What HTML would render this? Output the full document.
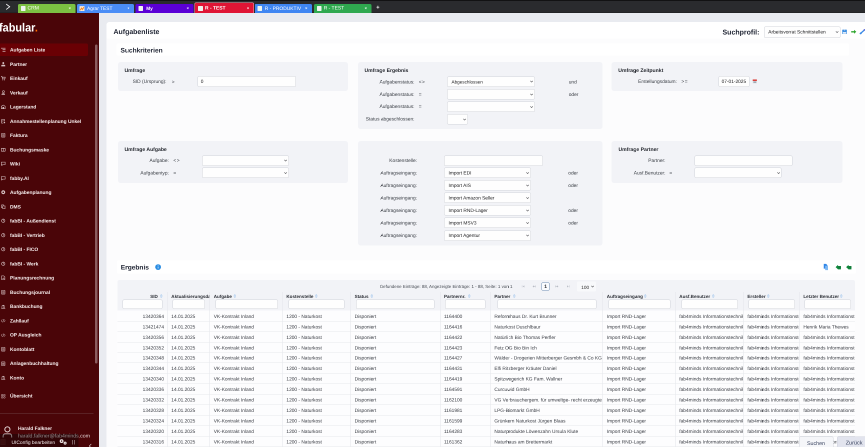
<!DOCTYPE html>
<html><head><meta charset="utf-8"><title>Aufgabenliste</title>
<style>
html,body{margin:0;padding:0;background:#e9ebf0;}
body{width:865px;height:447px;overflow:hidden;font-family:"Liberation Sans",sans-serif;text-rendering:geometricPrecision;-webkit-font-smoothing:antialiased;}
#root{position:absolute;left:0;top:0;width:1730px;height:894px;overflow:hidden;background:#e9ebf0;transform:scale(0.5);transform-origin:0 0;will-change:transform;}
.b{position:absolute;display:block;}
.t{position:absolute;white-space:nowrap;font-family:"Liberation Sans",sans-serif;}
</style></head><body><div id="root">

<div class="b" style="left:213px;top:44px;width:1527px;height:876px;background:#fcfcfd;border-radius:6px 0 0 0;"></div>
<div class="b" style="left:213px;top:44px;width:1527px;height:33.2px;background:#ffffff;border-radius:6px 0 0 0;"></div>
<div class="b" style="left:233px;top:87.4px;width:1464.8px;height:23.6px;background:#ffffff;border-radius:3px;"></div>
<div class="b" style="left:234px;top:521.2px;width:1477.5px;height:26.3px;background:#ffffff;border-radius:3px;"></div>
<div class="t" style="left:227px;top:54.46px;height:19.46px;line-height:19.46px;font-size:13.9px;font-weight:700;color:#1f2433;">Aufgabenliste</div>
<div class="t" style="left:241px;top:91.96px;height:18.48px;line-height:18.48px;font-size:13.2px;font-weight:700;color:#1f2433;">Suchkriterien</div>
<div class="t" style="left:241.5px;top:526.36px;height:18.48px;line-height:18.48px;font-size:13.2px;font-weight:700;color:#1f2433;">Ergebnis</div>
<div class="t" style="left:1445px;top:55.2px;height:19.6px;line-height:19.6px;font-size:14px;font-weight:700;color:#1f2433;">Suchprofil:</div>
<div class="b" style="left:1528.4px;top:52.5px;width:152.6px;height:23px;background:#fefefe;border:1px solid #d2d4da;border-radius:3px;box-sizing:border-box;"></div>
<div class="t" style="left:1536.6px;top:58.14px;height:13.52px;line-height:13.52px;font-size:9.66px;font-weight:400;color:#1c1c1e;">Arbeitsvorrat Schnittstellen</div>
<svg class="b" style="left:1671.2px;top:62.2px" width="6.4" height="4" viewBox="0 0 8 5"><path d="M0.8 0.8 L4 4 L7.2 0.8" fill="none" stroke="#5a5a5e" stroke-width="1.45"/></svg>
<svg class="b" style="left:1684.4px;top:58.6px" width="10.2" height="9.6" viewBox="0 0 10 10"><rect x="0.2" y="0.2" width="9.6" height="9.6" rx="1" fill="#3d8fe2"/><rect x="3.9" y="0.2" width="2.3" height="2.0" fill="#a9cbf0"/><rect x="1.5" y="5.2" width="7" height="3.8" fill="#dde9f8"/></svg>
<svg class="b" style="left:1701.8px;top:59px" width="11" height="9.2" viewBox="0 0 12 10"><path d="M0.4 3.6 H6.6 V0.8 L11.6 5 L6.6 9.2 V6.4 H0.4 Z" fill="#2fa62f"/></svg>
<svg class="b" style="left:1719.2px;top:57.2px" width="12" height="12" viewBox="0 0 12 12"><path d="M1.6 10.2 L10.4 2.6" stroke="#3a8ae6" stroke-width="2.6" stroke-linecap="round"/><circle cx="2.6" cy="9.6" r="1.9" fill="#3a8ae6"/><circle cx="9.8" cy="2.8" r="1.7" fill="#6a6fd6"/></svg>
<svg class="b" style="left:309.8px;top:528.3px" width="12.4" height="12.4" viewBox="0 0 12 12"><circle cx="6" cy="6" r="5.6" fill="#2b8de3"/><rect x="5.3" y="5.2" width="1.4" height="3.6" fill="#d8eafa"/><circle cx="6" cy="3.5" r="0.9" fill="#d8eafa"/></svg>
<svg class="b" style="left:1646.8px;top:526.8px" width="9.6" height="14" viewBox="0 0 10 14"><path d="M0.5 0.5 H5.5 L8 3 V10.5 H0.5 Z" fill="#2f86e8"/><path d="M3.5 4.5 H9.5 V13.5 H3.5 Z" fill="#7db8f3"/></svg>
<svg class="b" style="left:1671.2px;top:529.2px" width="11.2" height="10.4" viewBox="0 0 11 10"><path d="M0.4 5 L5 0.8 V3 H10.6 V9.4 H4.6 V7 H5 V9.2 Z" fill="#0e8a3c"/><path d="M0.4 5 L5 9.2 V0.8 Z" fill="#0e8a3c"/><rect x="5" y="3" width="5.6" height="4.6" fill="#137a3a"/></svg>
<svg class="b" style="left:1692px;top:529.2px" width="11.2" height="10.4" viewBox="0 0 11 10"><path d="M0.4 5 L5 0.8 V3 H10.6 V9.4 H4.6 V7 H5 V9.2 Z" fill="#0e8a3c"/><path d="M0.4 5 L5 9.2 V0.8 Z" fill="#0e8a3c"/><rect x="5" y="3" width="5.6" height="4.6" fill="#137a3a"/></svg>
<div class="b" style="left:236px;top:124px;width:460px;height:58.4px;background:#f2f3f7;border-radius:5.2px;"></div>
<div class="b" style="left:716px;top:124px;width:488.6px;height:134.2px;background:#f2f3f7;border-radius:5.2px;"></div>
<div class="b" style="left:1223px;top:124px;width:462px;height:58.4px;background:#f2f3f7;border-radius:5.2px;"></div>
<div class="b" style="left:236px;top:281.8px;width:460px;height:84.6px;background:#f2f3f7;border-radius:5.2px;"></div>
<div class="b" style="left:716px;top:281.8px;width:488.6px;height:209.4px;background:#f2f3f7;border-radius:5.2px;"></div>
<div class="b" style="left:1223px;top:281.8px;width:462px;height:84.2px;background:#f2f3f7;border-radius:5.2px;"></div>
<div class="t" style="left:249px;top:134.66px;height:14.28px;line-height:14.28px;font-size:10.2px;font-weight:700;color:#1f2229;">Umfrage</div>
<div class="t" style="left:-67px;width:400px;text-align:right;top:157.4px;height:13.58px;line-height:13.58px;font-size:9.7px;font-weight:400;color:#3c4047;">SID (Ursprung):</div>
<div class="t" style="left:343.6px;top:157.6px;height:13.58px;line-height:13.58px;font-size:9.7px;font-weight:400;color:#3c4047;">&gt;</div>
<div class="b" style="left:395px;top:152.3px;width:197px;height:21.4px;background:#fefefe;border:1px solid #d2d4da;border-radius:3px;box-sizing:border-box;"></div>
<div class="t" style="left:401.6px;top:157.18px;height:13.44px;line-height:13.44px;font-size:9.6px;font-weight:400;color:#1c1c1e;">0</div>
<div class="t" style="left:729px;top:134.66px;height:14.28px;line-height:14.28px;font-size:10.2px;font-weight:700;color:#1f2229;">Umfrage Ergebnis</div>
<div class="t" style="left:429px;width:400px;text-align:right;top:158.1px;height:13.58px;line-height:13.58px;font-size:9.7px;font-weight:400;color:#3c4047;">Aufgabenstatus:</div>
<div class="t" style="left:837.4px;top:158.1px;height:13.58px;line-height:13.58px;font-size:9.7px;font-weight:400;color:#3c4047;letter-spacing:1px;">&lt;&gt;</div>
<div class="b" style="left:894px;top:152.7px;width:175.6px;height:21px;background:#fefefe;border:1px solid #d2d4da;border-radius:3px;box-sizing:border-box;"></div>
<div class="t" style="left:903px;top:157.64px;height:12.94px;line-height:12.94px;font-size:9.24px;font-weight:400;color:#1c1c1e;">Abgeschlossen</div>
<svg class="b" style="left:1059.8px;top:161.4px" width="6.4" height="4" viewBox="0 0 8 5"><path d="M0.8 0.8 L4 4 L7.2 0.8" fill="none" stroke="#5a5a5e" stroke-width="1.45"/></svg>
<div class="t" style="left:429px;width:400px;text-align:right;top:182.6px;height:13.58px;line-height:13.58px;font-size:9.7px;font-weight:400;color:#3c4047;">Aufgabenstatus:</div>
<div class="t" style="left:837.4px;top:182.6px;height:13.58px;line-height:13.58px;font-size:9.7px;font-weight:400;color:#3c4047;">=</div>
<div class="b" style="left:894px;top:177.8px;width:175.6px;height:21px;background:#fefefe;border:1px solid #d2d4da;border-radius:3px;box-sizing:border-box;"></div>
<svg class="b" style="left:1059.8px;top:186.5px" width="6.4" height="4" viewBox="0 0 8 5"><path d="M0.8 0.8 L4 4 L7.2 0.8" fill="none" stroke="#5a5a5e" stroke-width="1.45"/></svg>
<div class="t" style="left:429px;width:400px;text-align:right;top:207.22px;height:13.58px;line-height:13.58px;font-size:9.7px;font-weight:400;color:#3c4047;">Aufgabenstatus:</div>
<div class="t" style="left:837.4px;top:207.22px;height:13.58px;line-height:13.58px;font-size:9.7px;font-weight:400;color:#3c4047;">=</div>
<div class="b" style="left:894px;top:202.8px;width:175.6px;height:21px;background:#fefefe;border:1px solid #d2d4da;border-radius:3px;box-sizing:border-box;"></div>
<svg class="b" style="left:1059.8px;top:211.5px" width="6.4" height="4" viewBox="0 0 8 5"><path d="M0.8 0.8 L4 4 L7.2 0.8" fill="none" stroke="#5a5a5e" stroke-width="1.45"/></svg>
<div class="t" style="left:429px;width:400px;text-align:right;top:232px;height:13.58px;line-height:13.58px;font-size:9.7px;font-weight:400;color:#3c4047;">Status abgeschlossen:</div>
<div class="b" style="left:894px;top:227.9px;width:41.6px;height:21.4px;background:#fefefe;border:1px solid #d2d4da;border-radius:3px;box-sizing:border-box;"></div>
<svg class="b" style="left:925.8px;top:236.8px" width="6.4" height="4" viewBox="0 0 8 5"><path d="M0.8 0.8 L4 4 L7.2 0.8" fill="none" stroke="#5a5a5e" stroke-width="1.45"/></svg>
<div class="t" style="left:1137.4px;top:158.1px;height:13.58px;line-height:13.58px;font-size:9.7px;font-weight:400;color:#3c4047;">und</div>
<div class="t" style="left:1137.4px;top:182.6px;height:13.58px;line-height:13.58px;font-size:9.7px;font-weight:400;color:#3c4047;">oder</div>
<div class="t" style="left:1236.6px;top:134.66px;height:14.28px;line-height:14.28px;font-size:10.2px;font-weight:700;color:#1f2229;">Umfrage Zeitpunkt</div>
<div class="t" style="left:953.8px;width:400px;text-align:right;top:157.4px;height:13.58px;line-height:13.58px;font-size:9.7px;font-weight:400;color:#3c4047;">Erstellungsdatum:</div>
<div class="t" style="left:1362.8px;top:157.4px;height:13.58px;line-height:13.58px;font-size:9.7px;font-weight:400;color:#3c4047;letter-spacing:1px;">&gt;=</div>
<div class="b" style="left:1436.6px;top:152.1px;width:62.6px;height:21.6px;background:#fefefe;border:1px solid #d2d4da;border-radius:3px;box-sizing:border-box;"></div>
<div class="t" style="left:1443.2px;top:157.08px;height:13.44px;line-height:13.44px;font-size:9.6px;font-weight:400;color:#1c1c1e;">07-01-2025</div>
<svg class="b" style="left:1505px;top:157.6px" width="9.2" height="9.6" viewBox="0 0 10 10"><rect x="0.5" y="0.8" width="9" height="8.6" rx="0.8" fill="#d9dde3"/><rect x="0.5" y="0.8" width="9" height="3.2" fill="#d9352f"/><rect x="2" y="5.2" width="6" height="3" fill="#9aa3ae"/></svg>
<div class="t" style="left:249px;top:292.66px;height:14.28px;line-height:14.28px;font-size:10.2px;font-weight:700;color:#1f2229;">Umfrage Aufgabe</div>
<div class="t" style="left:-62.2px;width:400px;text-align:right;top:315.4px;height:13.58px;line-height:13.58px;font-size:9.7px;font-weight:400;color:#3c4047;">Aufgabe:</div>
<div class="t" style="left:-62.2px;width:400px;text-align:right;top:340.4px;height:13.58px;line-height:13.58px;font-size:9.7px;font-weight:400;color:#3c4047;">Aufgabentyp:</div>
<div class="t" style="left:346.8px;top:315.4px;height:13.58px;line-height:13.58px;font-size:9.7px;font-weight:400;color:#3c4047;letter-spacing:1px;">&lt;&gt;</div>
<div class="t" style="left:346.8px;top:340.4px;height:13.58px;line-height:13.58px;font-size:9.7px;font-weight:400;color:#3c4047;">=</div>
<div class="b" style="left:404px;top:310.5px;width:174px;height:21.2px;background:#fefefe;border:1px solid #d2d4da;border-radius:3px;box-sizing:border-box;"></div>
<svg class="b" style="left:568.2px;top:319.3px" width="6.4" height="4" viewBox="0 0 8 5"><path d="M0.8 0.8 L4 4 L7.2 0.8" fill="none" stroke="#5a5a5e" stroke-width="1.45"/></svg>
<div class="b" style="left:404px;top:335.3px;width:174px;height:21px;background:#fefefe;border:1px solid #d2d4da;border-radius:3px;box-sizing:border-box;"></div>
<svg class="b" style="left:568.2px;top:344px" width="6.4" height="4" viewBox="0 0 8 5"><path d="M0.8 0.8 L4 4 L7.2 0.8" fill="none" stroke="#5a5a5e" stroke-width="1.45"/></svg>
<div class="t" style="left:434px;width:400px;text-align:right;top:315.2px;height:13.58px;line-height:13.58px;font-size:9.7px;font-weight:400;color:#3c4047;">Kostenstelle:</div>
<div class="b" style="left:888px;top:310.5px;width:198.4px;height:21px;background:#fefefe;border:1px solid #d2d4da;border-radius:3px;box-sizing:border-box;"></div>
<div class="t" style="left:434px;width:400px;text-align:right;top:340.2px;height:13.58px;line-height:13.58px;font-size:9.7px;font-weight:400;color:#3c4047;">Auftragseingang:</div>
<div class="b" style="left:888px;top:335.3px;width:174px;height:21px;background:#fefefe;border:1px solid #d2d4da;border-radius:3px;box-sizing:border-box;"></div>
<div class="t" style="left:897px;top:339.98px;height:13.44px;line-height:13.44px;font-size:9.6px;font-weight:400;color:#1c1c1e;">Import EDI</div>
<svg class="b" style="left:1052.2px;top:344px" width="6.4" height="4" viewBox="0 0 8 5"><path d="M0.8 0.8 L4 4 L7.2 0.8" fill="none" stroke="#5a5a5e" stroke-width="1.45"/></svg>
<div class="t" style="left:1136.6px;top:340.2px;height:13.58px;line-height:13.58px;font-size:9.7px;font-weight:400;color:#3c4047;">oder</div>
<div class="t" style="left:434px;width:400px;text-align:right;top:365.24px;height:13.58px;line-height:13.58px;font-size:9.7px;font-weight:400;color:#3c4047;">Auftragseingang:</div>
<div class="b" style="left:888px;top:360.34px;width:174px;height:21px;background:#fefefe;border:1px solid #d2d4da;border-radius:3px;box-sizing:border-box;"></div>
<div class="t" style="left:897px;top:365.02px;height:13.44px;line-height:13.44px;font-size:9.6px;font-weight:400;color:#1c1c1e;">Import AIS</div>
<svg class="b" style="left:1052.2px;top:369.04px" width="6.4" height="4" viewBox="0 0 8 5"><path d="M0.8 0.8 L4 4 L7.2 0.8" fill="none" stroke="#5a5a5e" stroke-width="1.45"/></svg>
<div class="t" style="left:1136.6px;top:365.24px;height:13.58px;line-height:13.58px;font-size:9.7px;font-weight:400;color:#3c4047;">oder</div>
<div class="t" style="left:434px;width:400px;text-align:right;top:390.28px;height:13.58px;line-height:13.58px;font-size:9.7px;font-weight:400;color:#3c4047;">Auftragseingang:</div>
<div class="b" style="left:888px;top:385.38px;width:174px;height:21px;background:#fefefe;border:1px solid #d2d4da;border-radius:3px;box-sizing:border-box;"></div>
<div class="t" style="left:897px;top:390.06px;height:13.44px;line-height:13.44px;font-size:9.6px;font-weight:400;color:#1c1c1e;">Import Amazon Seller</div>
<svg class="b" style="left:1052.2px;top:394.08px" width="6.4" height="4" viewBox="0 0 8 5"><path d="M0.8 0.8 L4 4 L7.2 0.8" fill="none" stroke="#5a5a5e" stroke-width="1.45"/></svg>
<div class="t" style="left:434px;width:400px;text-align:right;top:415.32px;height:13.58px;line-height:13.58px;font-size:9.7px;font-weight:400;color:#3c4047;">Auftragseingang:</div>
<div class="b" style="left:888px;top:410.42px;width:174px;height:21px;background:#fefefe;border:1px solid #d2d4da;border-radius:3px;box-sizing:border-box;"></div>
<div class="t" style="left:897px;top:415.1px;height:13.44px;line-height:13.44px;font-size:9.6px;font-weight:400;color:#1c1c1e;">Import RND-Lager</div>
<svg class="b" style="left:1052.2px;top:419.12px" width="6.4" height="4" viewBox="0 0 8 5"><path d="M0.8 0.8 L4 4 L7.2 0.8" fill="none" stroke="#5a5a5e" stroke-width="1.45"/></svg>
<div class="t" style="left:1136.6px;top:415.32px;height:13.58px;line-height:13.58px;font-size:9.7px;font-weight:400;color:#3c4047;">oder</div>
<div class="t" style="left:434px;width:400px;text-align:right;top:440.38px;height:13.58px;line-height:13.58px;font-size:9.7px;font-weight:400;color:#3c4047;">Auftragseingang:</div>
<div class="b" style="left:888px;top:435.46px;width:174px;height:21px;background:#fefefe;border:1px solid #d2d4da;border-radius:3px;box-sizing:border-box;"></div>
<div class="t" style="left:897px;top:440.14px;height:13.44px;line-height:13.44px;font-size:9.6px;font-weight:400;color:#1c1c1e;">Import MSV3</div>
<svg class="b" style="left:1052.2px;top:444.16px" width="6.4" height="4" viewBox="0 0 8 5"><path d="M0.8 0.8 L4 4 L7.2 0.8" fill="none" stroke="#5a5a5e" stroke-width="1.45"/></svg>
<div class="t" style="left:1136.6px;top:440.38px;height:13.58px;line-height:13.58px;font-size:9.7px;font-weight:400;color:#3c4047;">oder</div>
<div class="t" style="left:434px;width:400px;text-align:right;top:465.4px;height:13.58px;line-height:13.58px;font-size:9.7px;font-weight:400;color:#3c4047;">Auftragseingang:</div>
<div class="b" style="left:888px;top:460.5px;width:174px;height:21px;background:#fefefe;border:1px solid #d2d4da;border-radius:3px;box-sizing:border-box;"></div>
<div class="t" style="left:897px;top:465.18px;height:13.44px;line-height:13.44px;font-size:9.6px;font-weight:400;color:#1c1c1e;">Import Agentur</div>
<svg class="b" style="left:1052.2px;top:469.2px" width="6.4" height="4" viewBox="0 0 8 5"><path d="M0.8 0.8 L4 4 L7.2 0.8" fill="none" stroke="#5a5a5e" stroke-width="1.45"/></svg>
<div class="t" style="left:1237px;top:292.66px;height:14.28px;line-height:14.28px;font-size:10.2px;font-weight:700;color:#1f2229;">Umfrage Partner</div>
<div class="t" style="left:931px;width:400px;text-align:right;top:315.2px;height:13.58px;line-height:13.58px;font-size:9.7px;font-weight:400;color:#3c4047;">Partner:</div>
<div class="t" style="left:931px;width:400px;text-align:right;top:340.2px;height:13.58px;line-height:13.58px;font-size:9.7px;font-weight:400;color:#3c4047;">Ausf.Benutzer:</div>
<div class="t" style="left:1338.8px;top:340.2px;height:13.58px;line-height:13.58px;font-size:9.7px;font-weight:400;color:#3c4047;">=</div>
<div class="b" style="left:1389.2px;top:310.5px;width:196.2px;height:21px;background:#fefefe;border:1px solid #d2d4da;border-radius:3px;box-sizing:border-box;"></div>
<div class="b" style="left:1389.2px;top:335.3px;width:174.2px;height:21px;background:#fefefe;border:1px solid #d2d4da;border-radius:3px;box-sizing:border-box;"></div>
<svg class="b" style="left:1553.6px;top:344px" width="6.4" height="4" viewBox="0 0 8 5"><path d="M0.8 0.8 L4 4 L7.2 0.8" fill="none" stroke="#5a5a5e" stroke-width="1.45"/></svg>
<div class="b" style="left:234.5px;top:560px;width:1475px;height:61.2px;background:#f2f3f7;border-radius:4px 4px 0 0;"></div>
<div class="b" style="left:234.5px;top:621.2px;width:1475px;height:272.8px;background:#fdfdfe;"></div>
<div class="t" style="left:759.4px;top:567.18px;height:12.44px;line-height:12.44px;font-size:8.88px;font-weight:400;color:#4a4f57;">Gefundene Einträge: 88, Angezeigte Einträge: 1 - 88, Seite: 1 von 1</div>
<svg class="b" style="left:1043.4px;top:570.2px" width="8" height="5.6" viewBox="0 0 10 8"><path d="M1 1 V7" stroke="#b5b9c2" stroke-width="1"/><path d="M7.5 1 L3 4 L7.5 7 Z" fill="#b5b9c2"/></svg>
<svg class="b" style="left:1064.4px;top:570.2px" width="8" height="5.6" viewBox="0 0 10 8"><path d="M5 1 L0.8 4 L5 7 Z M9.4 1 L5.2 4 L9.4 7 Z" fill="#b5b9c2"/></svg>
<svg class="b" style="left:1110.4px;top:570.2px" width="8" height="5.6" viewBox="0 0 10 8"><path d="M0.6 1 L4.8 4 L0.6 7 Z M5 1 L9.2 4 L5 7 Z" fill="#b5b9c2"/></svg>
<svg class="b" style="left:1131.6px;top:570.2px" width="8" height="5.6" viewBox="0 0 10 8"><path d="M9 1 V7" stroke="#b5b9c2" stroke-width="1"/><path d="M2.5 1 L7 4 L2.5 7 Z" fill="#b5b9c2"/></svg>
<div class="b" style="left:1154px;top:563.2px;width:38px;height:19.6px;background:#f8f9fb;border-radius:2.4px;"></div>
<div class="b" style="left:1083px;top:564.8px;width:16.2px;height:16.4px;background:#fbfcfe;border:1.1px solid #6f8fb4;border-radius:2px;box-sizing:border-box;"></div>
<div class="t" style="left:1088.4px;top:567.14px;height:13.72px;line-height:13.72px;font-size:9.8px;font-weight:700;color:#2a2d33;">1</div>
<div class="t" style="left:1162.6px;top:567.62px;height:13.16px;line-height:13.16px;font-size:9.4px;font-weight:400;color:#333;">100</div>
<svg class="b" style="left:1182.2px;top:571.4px" width="6.4" height="4" viewBox="0 0 8 5"><path d="M0.8 0.8 L4 4 L7.2 0.8" fill="none" stroke="#5a5a5e" stroke-width="1.45"/></svg>
<div class="t" style="left:-84.4px;width:400px;text-align:right;top:587.04px;height:12.74px;line-height:12.74px;font-size:9.1px;font-weight:700;color:#2c2f36;">SID</div>
<svg class="b" style="left:320px;top:587.8px" width="5.2" height="8.4" viewBox="0 0 6 10"><path d="M3 0.7 L5.3 3.6 H0.7 Z M3 9.3 L5.3 6.4 H0.7 Z" fill="#eef4fb" stroke="#86b4e6" stroke-width="0.8"/></svg>
<div class="b" style="left:244.5px;top:599px;width:80.7px;height:19.4px;background:#fefefe;border:1px solid #d2d4da;border-radius:3px;box-sizing:border-box;"></div>
<div class="b" style="left:334.3px;top:584.4px;width:1px;height:309.6px;background:#e3e5ea;"></div>
<div class="t" style="left:342.6px;top:587.04px;height:12.74px;line-height:12.74px;font-size:9.1px;font-weight:700;color:#2c2f36;width:76.8px;overflow:hidden;">Aktualisierungsdatum</div>
<div class="b" style="left:344.5px;top:599px;width:65.7px;height:19.4px;background:#fefefe;border:1px solid #d2d4da;border-radius:3px;box-sizing:border-box;"></div>
<div class="b" style="left:419.1px;top:584.4px;width:1px;height:309.6px;background:#e3e5ea;"></div>
<div class="t" style="left:427.4px;top:587.04px;height:12.74px;line-height:12.74px;font-size:9.1px;font-weight:700;color:#2c2f36;width:137.4px;overflow:hidden;">Aufgabe</div>
<svg class="b" style="left:467.2px;top:587.8px" width="5.2" height="8.4" viewBox="0 0 6 10"><path d="M3 0.7 L5.3 3.6 H0.7 Z M3 9.3 L5.3 6.4 H0.7 Z" fill="#eef4fb" stroke="#86b4e6" stroke-width="0.8"/></svg>
<div class="b" style="left:431px;top:599px;width:124.5px;height:19.4px;background:#fefefe;border:1px solid #d2d4da;border-radius:3px;box-sizing:border-box;"></div>
<div class="b" style="left:564.5px;top:584.4px;width:1px;height:309.6px;background:#e3e5ea;"></div>
<div class="t" style="left:572.8px;top:587.04px;height:12.74px;line-height:12.74px;font-size:9.1px;font-weight:700;color:#2c2f36;width:128.4px;overflow:hidden;">Kostenstelle</div>
<svg class="b" style="left:630.4px;top:587.8px" width="5.2" height="8.4" viewBox="0 0 6 10"><path d="M3 0.7 L5.3 3.6 H0.7 Z M3 9.3 L5.3 6.4 H0.7 Z" fill="#eef4fb" stroke="#86b4e6" stroke-width="0.8"/></svg>
<div class="b" style="left:576.6px;top:599px;width:112.8px;height:19.4px;background:#fefefe;border:1px solid #d2d4da;border-radius:3px;box-sizing:border-box;"></div>
<div class="b" style="left:700.9px;top:584.4px;width:1px;height:309.6px;background:#e3e5ea;"></div>
<div class="t" style="left:709.2px;top:587.04px;height:12.74px;line-height:12.74px;font-size:9.1px;font-weight:700;color:#2c2f36;width:170.8px;overflow:hidden;">Status</div>
<svg class="b" style="left:740.8px;top:587.8px" width="5.2" height="8.4" viewBox="0 0 6 10"><path d="M3 0.7 L5.3 3.6 H0.7 Z M3 9.3 L5.3 6.4 H0.7 Z" fill="#eef4fb" stroke="#86b4e6" stroke-width="0.8"/></svg>
<div class="b" style="left:711.6px;top:599px;width:157.2px;height:19.4px;background:#fefefe;border:1px solid #d2d4da;border-radius:3px;box-sizing:border-box;"></div>
<div class="b" style="left:879.7px;top:584.4px;width:1px;height:309.6px;background:#e3e5ea;"></div>
<div class="t" style="left:888px;top:587.04px;height:12.74px;line-height:12.74px;font-size:9.1px;font-weight:700;color:#2c2f36;width:92.8px;overflow:hidden;">Partnernr.</div>
<svg class="b" style="left:936.4px;top:587.8px" width="5.2" height="8.4" viewBox="0 0 6 10"><path d="M3 0.7 L5.3 3.6 H0.7 Z M3 9.3 L5.3 6.4 H0.7 Z" fill="#eef4fb" stroke="#86b4e6" stroke-width="0.8"/></svg>
<div class="b" style="left:890.2px;top:599px;width:81px;height:19.4px;background:#fefefe;border:1px solid #d2d4da;border-radius:3px;box-sizing:border-box;"></div>
<div class="b" style="left:980.5px;top:584.4px;width:1px;height:309.6px;background:#e3e5ea;"></div>
<div class="t" style="left:988.8px;top:587.04px;height:12.74px;line-height:12.74px;font-size:9.1px;font-weight:700;color:#2c2f36;width:216.8px;overflow:hidden;">Partner</div>
<svg class="b" style="left:1025.8px;top:587.8px" width="5.2" height="8.4" viewBox="0 0 6 10"><path d="M3 0.7 L5.3 3.6 H0.7 Z M3 9.3 L5.3 6.4 H0.7 Z" fill="#eef4fb" stroke="#86b4e6" stroke-width="0.8"/></svg>
<div class="b" style="left:994.8px;top:599px;width:197.8px;height:19.4px;background:#fefefe;border:1px solid #d2d4da;border-radius:3px;box-sizing:border-box;"></div>
<div class="b" style="left:1205.3px;top:584.4px;width:1px;height:309.6px;background:#e3e5ea;"></div>
<div class="t" style="left:1213.6px;top:587.04px;height:12.74px;line-height:12.74px;font-size:9.1px;font-weight:700;color:#2c2f36;width:137px;overflow:hidden;">Auftragseingang</div>
<svg class="b" style="left:1288px;top:587.8px" width="5.2" height="8.4" viewBox="0 0 6 10"><path d="M3 0.7 L5.3 3.6 H0.7 Z M3 9.3 L5.3 6.4 H0.7 Z" fill="#eef4fb" stroke="#86b4e6" stroke-width="0.8"/></svg>
<div class="b" style="left:1217px;top:599px;width:124.2px;height:19.4px;background:#fefefe;border:1px solid #d2d4da;border-radius:3px;box-sizing:border-box;"></div>
<div class="b" style="left:1350.3px;top:584.4px;width:1px;height:309.6px;background:#e3e5ea;"></div>
<div class="t" style="left:1358.6px;top:587.04px;height:12.74px;line-height:12.74px;font-size:9.1px;font-weight:700;color:#2c2f36;width:128.2px;overflow:hidden;">Ausf.Benutzer</div>
<svg class="b" style="left:1423.8px;top:587.8px" width="5.2" height="8.4" viewBox="0 0 6 10"><path d="M3 0.7 L5.3 3.6 H0.7 Z M3 9.3 L5.3 6.4 H0.7 Z" fill="#eef4fb" stroke="#86b4e6" stroke-width="0.8"/></svg>
<div class="b" style="left:1362.6px;top:599px;width:113.4px;height:19.4px;background:#fefefe;border:1px solid #d2d4da;border-radius:3px;box-sizing:border-box;"></div>
<div class="b" style="left:1486.5px;top:584.4px;width:1px;height:309.6px;background:#e3e5ea;"></div>
<div class="t" style="left:1494.8px;top:587.04px;height:12.74px;line-height:12.74px;font-size:9.1px;font-weight:700;color:#2c2f36;width:104px;overflow:hidden;">Ersteller</div>
<svg class="b" style="left:1534.4px;top:587.8px" width="5.2" height="8.4" viewBox="0 0 6 10"><path d="M3 0.7 L5.3 3.6 H0.7 Z M3 9.3 L5.3 6.4 H0.7 Z" fill="#eef4fb" stroke="#86b4e6" stroke-width="0.8"/></svg>
<div class="b" style="left:1497.4px;top:599px;width:92.4px;height:19.4px;background:#fefefe;border:1px solid #d2d4da;border-radius:3px;box-sizing:border-box;"></div>
<div class="b" style="left:1598.5px;top:584.4px;width:1px;height:309.6px;background:#e3e5ea;"></div>
<div class="t" style="left:1606.8px;top:587.04px;height:12.74px;line-height:12.74px;font-size:9.1px;font-weight:700;color:#2c2f36;width:102.5px;overflow:hidden;">Letzter Benutzer</div>
<svg class="b" style="left:1680.4px;top:587.8px" width="5.2" height="8.4" viewBox="0 0 6 10"><path d="M3 0.7 L5.3 3.6 H0.7 Z M3 9.3 L5.3 6.4 H0.7 Z" fill="#eef4fb" stroke="#86b4e6" stroke-width="0.8"/></svg>
<div class="b" style="left:1608.5px;top:599px;width:93.5px;height:19.4px;background:#fefefe;border:1px solid #d2d4da;border-radius:3px;box-sizing:border-box;"></div>
<div class="b" style="left:234.5px;top:641.64px;width:1475px;height:1px;background:#e6e8ec;"></div>
<div class="t" style="left:-72px;width:400px;text-align:right;top:626.68px;height:13.44px;line-height:13.44px;font-size:9.6px;font-weight:400;color:#3a3d44;">13420364</div>
<div class="t" style="left:342.6px;top:626.68px;height:13.44px;line-height:13.44px;font-size:9.6px;font-weight:400;color:#3a3d44;width:76.4px;overflow:hidden;">14.01.2025</div>
<div class="t" style="left:427.4px;top:626.68px;height:13.44px;line-height:13.44px;font-size:9.6px;font-weight:400;color:#3a3d44;width:137px;overflow:hidden;">VK-Kontrakt Inland</div>
<div class="t" style="left:572.8px;top:626.68px;height:13.44px;line-height:13.44px;font-size:9.6px;font-weight:400;color:#3a3d44;width:128px;overflow:hidden;">1200 - Naturkost</div>
<div class="t" style="left:709.2px;top:626.68px;height:13.44px;line-height:13.44px;font-size:9.6px;font-weight:400;color:#3a3d44;width:170.4px;overflow:hidden;">Disponiert</div>
<div class="t" style="left:888px;top:626.68px;height:13.44px;line-height:13.44px;font-size:9.6px;font-weight:400;color:#3a3d44;width:92.4px;overflow:hidden;">1164400</div>
<div class="t" style="left:988.8px;top:626.68px;height:13.44px;line-height:13.44px;font-size:9.6px;font-weight:400;color:#3a3d44;width:216.4px;overflow:hidden;">Reformhaus Dr. Kurt Brunner</div>
<div class="t" style="left:1213.6px;top:626.68px;height:13.44px;line-height:13.44px;font-size:9.6px;font-weight:400;color:#3a3d44;width:136.6px;overflow:hidden;">Import RND-Lager</div>
<div class="t" style="left:1358.6px;top:626.68px;height:13.44px;line-height:13.44px;font-size:9.6px;font-weight:400;color:#3a3d44;width:127.8px;overflow:hidden;">fab4minds Informationstechnik</div>
<div class="t" style="left:1494.8px;top:626.68px;height:13.44px;line-height:13.44px;font-size:9.6px;font-weight:400;color:#3a3d44;width:103.6px;overflow:hidden;">fab4minds Informationstechnik</div>
<div class="t" style="left:1606.8px;top:626.68px;height:13.44px;line-height:13.44px;font-size:9.6px;font-weight:400;color:#3a3d44;width:102.1px;overflow:hidden;">fab4minds Informationstechnik</div>
<div class="b" style="left:234.5px;top:662.58px;width:1475px;height:1px;background:#e6e8ec;"></div>
<div class="t" style="left:-72px;width:400px;text-align:right;top:647.62px;height:13.44px;line-height:13.44px;font-size:9.6px;font-weight:400;color:#3a3d44;">13421474</div>
<div class="t" style="left:342.6px;top:647.62px;height:13.44px;line-height:13.44px;font-size:9.6px;font-weight:400;color:#3a3d44;width:76.4px;overflow:hidden;">14.01.2025</div>
<div class="t" style="left:427.4px;top:647.62px;height:13.44px;line-height:13.44px;font-size:9.6px;font-weight:400;color:#3a3d44;width:137px;overflow:hidden;">VK-Kontrakt Inland</div>
<div class="t" style="left:572.8px;top:647.62px;height:13.44px;line-height:13.44px;font-size:9.6px;font-weight:400;color:#3a3d44;width:128px;overflow:hidden;">1200 - Naturkost</div>
<div class="t" style="left:709.2px;top:647.62px;height:13.44px;line-height:13.44px;font-size:9.6px;font-weight:400;color:#3a3d44;width:170.4px;overflow:hidden;">Disponiert</div>
<div class="t" style="left:888px;top:647.62px;height:13.44px;line-height:13.44px;font-size:9.6px;font-weight:400;color:#3a3d44;width:92.4px;overflow:hidden;">1164416</div>
<div class="t" style="left:988.8px;top:647.62px;height:13.44px;line-height:13.44px;font-size:9.6px;font-weight:400;color:#3a3d44;width:216.4px;overflow:hidden;">Naturkost Duschlbaur</div>
<div class="t" style="left:1213.6px;top:647.62px;height:13.44px;line-height:13.44px;font-size:9.6px;font-weight:400;color:#3a3d44;width:136.6px;overflow:hidden;">Import RND-Lager</div>
<div class="t" style="left:1358.6px;top:647.62px;height:13.44px;line-height:13.44px;font-size:9.6px;font-weight:400;color:#3a3d44;width:127.8px;overflow:hidden;">fab4minds Informationstechnik</div>
<div class="t" style="left:1494.8px;top:647.62px;height:13.44px;line-height:13.44px;font-size:9.6px;font-weight:400;color:#3a3d44;width:103.6px;overflow:hidden;">fab4minds Informationstechnik</div>
<div class="t" style="left:1606.8px;top:647.62px;height:13.44px;line-height:13.44px;font-size:9.6px;font-weight:400;color:#3a3d44;width:102.1px;overflow:hidden;">Henrik Maria Thewes</div>
<div class="b" style="left:234.5px;top:683.52px;width:1475px;height:1px;background:#e6e8ec;"></div>
<div class="t" style="left:-72px;width:400px;text-align:right;top:668.56px;height:13.44px;line-height:13.44px;font-size:9.6px;font-weight:400;color:#3a3d44;">13420356</div>
<div class="t" style="left:342.6px;top:668.56px;height:13.44px;line-height:13.44px;font-size:9.6px;font-weight:400;color:#3a3d44;width:76.4px;overflow:hidden;">14.01.2025</div>
<div class="t" style="left:427.4px;top:668.56px;height:13.44px;line-height:13.44px;font-size:9.6px;font-weight:400;color:#3a3d44;width:137px;overflow:hidden;">VK-Kontrakt Inland</div>
<div class="t" style="left:572.8px;top:668.56px;height:13.44px;line-height:13.44px;font-size:9.6px;font-weight:400;color:#3a3d44;width:128px;overflow:hidden;">1200 - Naturkost</div>
<div class="t" style="left:709.2px;top:668.56px;height:13.44px;line-height:13.44px;font-size:9.6px;font-weight:400;color:#3a3d44;width:170.4px;overflow:hidden;">Disponiert</div>
<div class="t" style="left:888px;top:668.56px;height:13.44px;line-height:13.44px;font-size:9.6px;font-weight:400;color:#3a3d44;width:92.4px;overflow:hidden;">1164422</div>
<div class="t" style="left:988.8px;top:668.56px;height:13.44px;line-height:13.44px;font-size:9.6px;font-weight:400;color:#3a3d44;width:216.4px;overflow:hidden;">Natürlich Bio Thomas Perfler</div>
<div class="t" style="left:1213.6px;top:668.56px;height:13.44px;line-height:13.44px;font-size:9.6px;font-weight:400;color:#3a3d44;width:136.6px;overflow:hidden;">Import RND-Lager</div>
<div class="t" style="left:1358.6px;top:668.56px;height:13.44px;line-height:13.44px;font-size:9.6px;font-weight:400;color:#3a3d44;width:127.8px;overflow:hidden;">fab4minds Informationstechnik</div>
<div class="t" style="left:1494.8px;top:668.56px;height:13.44px;line-height:13.44px;font-size:9.6px;font-weight:400;color:#3a3d44;width:103.6px;overflow:hidden;">fab4minds Informationstechnik</div>
<div class="t" style="left:1606.8px;top:668.56px;height:13.44px;line-height:13.44px;font-size:9.6px;font-weight:400;color:#3a3d44;width:102.1px;overflow:hidden;">fab4minds Informationstechnik</div>
<div class="b" style="left:234.5px;top:704.46px;width:1475px;height:1px;background:#e6e8ec;"></div>
<div class="t" style="left:-72px;width:400px;text-align:right;top:689.5px;height:13.44px;line-height:13.44px;font-size:9.6px;font-weight:400;color:#3a3d44;">13420352</div>
<div class="t" style="left:342.6px;top:689.5px;height:13.44px;line-height:13.44px;font-size:9.6px;font-weight:400;color:#3a3d44;width:76.4px;overflow:hidden;">14.01.2025</div>
<div class="t" style="left:427.4px;top:689.5px;height:13.44px;line-height:13.44px;font-size:9.6px;font-weight:400;color:#3a3d44;width:137px;overflow:hidden;">VK-Kontrakt Inland</div>
<div class="t" style="left:572.8px;top:689.5px;height:13.44px;line-height:13.44px;font-size:9.6px;font-weight:400;color:#3a3d44;width:128px;overflow:hidden;">1200 - Naturkost</div>
<div class="t" style="left:709.2px;top:689.5px;height:13.44px;line-height:13.44px;font-size:9.6px;font-weight:400;color:#3a3d44;width:170.4px;overflow:hidden;">Disponiert</div>
<div class="t" style="left:888px;top:689.5px;height:13.44px;line-height:13.44px;font-size:9.6px;font-weight:400;color:#3a3d44;width:92.4px;overflow:hidden;">1164423</div>
<div class="t" style="left:988.8px;top:689.5px;height:13.44px;line-height:13.44px;font-size:9.6px;font-weight:400;color:#3a3d44;width:216.4px;overflow:hidden;">Fetz OG Bio Bin Ich</div>
<div class="t" style="left:1213.6px;top:689.5px;height:13.44px;line-height:13.44px;font-size:9.6px;font-weight:400;color:#3a3d44;width:136.6px;overflow:hidden;">Import RND-Lager</div>
<div class="t" style="left:1358.6px;top:689.5px;height:13.44px;line-height:13.44px;font-size:9.6px;font-weight:400;color:#3a3d44;width:127.8px;overflow:hidden;">fab4minds Informationstechnik</div>
<div class="t" style="left:1494.8px;top:689.5px;height:13.44px;line-height:13.44px;font-size:9.6px;font-weight:400;color:#3a3d44;width:103.6px;overflow:hidden;">fab4minds Informationstechnik</div>
<div class="t" style="left:1606.8px;top:689.5px;height:13.44px;line-height:13.44px;font-size:9.6px;font-weight:400;color:#3a3d44;width:102.1px;overflow:hidden;">fab4minds Informationstechnik</div>
<div class="b" style="left:234.5px;top:725.4px;width:1475px;height:1px;background:#e6e8ec;"></div>
<div class="t" style="left:-72px;width:400px;text-align:right;top:710.44px;height:13.44px;line-height:13.44px;font-size:9.6px;font-weight:400;color:#3a3d44;">13420348</div>
<div class="t" style="left:342.6px;top:710.44px;height:13.44px;line-height:13.44px;font-size:9.6px;font-weight:400;color:#3a3d44;width:76.4px;overflow:hidden;">14.01.2025</div>
<div class="t" style="left:427.4px;top:710.44px;height:13.44px;line-height:13.44px;font-size:9.6px;font-weight:400;color:#3a3d44;width:137px;overflow:hidden;">VK-Kontrakt Inland</div>
<div class="t" style="left:572.8px;top:710.44px;height:13.44px;line-height:13.44px;font-size:9.6px;font-weight:400;color:#3a3d44;width:128px;overflow:hidden;">1200 - Naturkost</div>
<div class="t" style="left:709.2px;top:710.44px;height:13.44px;line-height:13.44px;font-size:9.6px;font-weight:400;color:#3a3d44;width:170.4px;overflow:hidden;">Disponiert</div>
<div class="t" style="left:888px;top:710.44px;height:13.44px;line-height:13.44px;font-size:9.6px;font-weight:400;color:#3a3d44;width:92.4px;overflow:hidden;">1164427</div>
<div class="t" style="left:988.8px;top:710.44px;height:13.44px;line-height:13.44px;font-size:9.6px;font-weight:400;color:#3a3d44;width:216.4px;overflow:hidden;">Wälder - Drogerien Mitterberger Gesmbh &amp; Co KG</div>
<div class="t" style="left:1213.6px;top:710.44px;height:13.44px;line-height:13.44px;font-size:9.6px;font-weight:400;color:#3a3d44;width:136.6px;overflow:hidden;">Import RND-Lager</div>
<div class="t" style="left:1358.6px;top:710.44px;height:13.44px;line-height:13.44px;font-size:9.6px;font-weight:400;color:#3a3d44;width:127.8px;overflow:hidden;">fab4minds Informationstechnik</div>
<div class="t" style="left:1494.8px;top:710.44px;height:13.44px;line-height:13.44px;font-size:9.6px;font-weight:400;color:#3a3d44;width:103.6px;overflow:hidden;">fab4minds Informationstechnik</div>
<div class="t" style="left:1606.8px;top:710.44px;height:13.44px;line-height:13.44px;font-size:9.6px;font-weight:400;color:#3a3d44;width:102.1px;overflow:hidden;">fab4minds Informationstechnik</div>
<div class="b" style="left:234.5px;top:746.34px;width:1475px;height:1px;background:#e6e8ec;"></div>
<div class="t" style="left:-72px;width:400px;text-align:right;top:731.38px;height:13.44px;line-height:13.44px;font-size:9.6px;font-weight:400;color:#3a3d44;">13420344</div>
<div class="t" style="left:342.6px;top:731.38px;height:13.44px;line-height:13.44px;font-size:9.6px;font-weight:400;color:#3a3d44;width:76.4px;overflow:hidden;">14.01.2025</div>
<div class="t" style="left:427.4px;top:731.38px;height:13.44px;line-height:13.44px;font-size:9.6px;font-weight:400;color:#3a3d44;width:137px;overflow:hidden;">VK-Kontrakt Inland</div>
<div class="t" style="left:572.8px;top:731.38px;height:13.44px;line-height:13.44px;font-size:9.6px;font-weight:400;color:#3a3d44;width:128px;overflow:hidden;">1200 - Naturkost</div>
<div class="t" style="left:709.2px;top:731.38px;height:13.44px;line-height:13.44px;font-size:9.6px;font-weight:400;color:#3a3d44;width:170.4px;overflow:hidden;">Disponiert</div>
<div class="t" style="left:888px;top:731.38px;height:13.44px;line-height:13.44px;font-size:9.6px;font-weight:400;color:#3a3d44;width:92.4px;overflow:hidden;">1164431</div>
<div class="t" style="left:988.8px;top:731.38px;height:13.44px;line-height:13.44px;font-size:9.6px;font-weight:400;color:#3a3d44;width:216.4px;overflow:hidden;">Elfi Ritzberger Kräuter Daniel</div>
<div class="t" style="left:1213.6px;top:731.38px;height:13.44px;line-height:13.44px;font-size:9.6px;font-weight:400;color:#3a3d44;width:136.6px;overflow:hidden;">Import RND-Lager</div>
<div class="t" style="left:1358.6px;top:731.38px;height:13.44px;line-height:13.44px;font-size:9.6px;font-weight:400;color:#3a3d44;width:127.8px;overflow:hidden;">fab4minds Informationstechnik</div>
<div class="t" style="left:1494.8px;top:731.38px;height:13.44px;line-height:13.44px;font-size:9.6px;font-weight:400;color:#3a3d44;width:103.6px;overflow:hidden;">fab4minds Informationstechnik</div>
<div class="t" style="left:1606.8px;top:731.38px;height:13.44px;line-height:13.44px;font-size:9.6px;font-weight:400;color:#3a3d44;width:102.1px;overflow:hidden;">fab4minds Informationstechnik</div>
<div class="b" style="left:234.5px;top:767.28px;width:1475px;height:1px;background:#e6e8ec;"></div>
<div class="t" style="left:-72px;width:400px;text-align:right;top:752.32px;height:13.44px;line-height:13.44px;font-size:9.6px;font-weight:400;color:#3a3d44;">13420340</div>
<div class="t" style="left:342.6px;top:752.32px;height:13.44px;line-height:13.44px;font-size:9.6px;font-weight:400;color:#3a3d44;width:76.4px;overflow:hidden;">14.01.2025</div>
<div class="t" style="left:427.4px;top:752.32px;height:13.44px;line-height:13.44px;font-size:9.6px;font-weight:400;color:#3a3d44;width:137px;overflow:hidden;">VK-Kontrakt Inland</div>
<div class="t" style="left:572.8px;top:752.32px;height:13.44px;line-height:13.44px;font-size:9.6px;font-weight:400;color:#3a3d44;width:128px;overflow:hidden;">1200 - Naturkost</div>
<div class="t" style="left:709.2px;top:752.32px;height:13.44px;line-height:13.44px;font-size:9.6px;font-weight:400;color:#3a3d44;width:170.4px;overflow:hidden;">Disponiert</div>
<div class="t" style="left:888px;top:752.32px;height:13.44px;line-height:13.44px;font-size:9.6px;font-weight:400;color:#3a3d44;width:92.4px;overflow:hidden;">1164419</div>
<div class="t" style="left:988.8px;top:752.32px;height:13.44px;line-height:13.44px;font-size:9.6px;font-weight:400;color:#3a3d44;width:216.4px;overflow:hidden;">Spitzwegerich KG Fam. Wallner</div>
<div class="t" style="left:1213.6px;top:752.32px;height:13.44px;line-height:13.44px;font-size:9.6px;font-weight:400;color:#3a3d44;width:136.6px;overflow:hidden;">Import RND-Lager</div>
<div class="t" style="left:1358.6px;top:752.32px;height:13.44px;line-height:13.44px;font-size:9.6px;font-weight:400;color:#3a3d44;width:127.8px;overflow:hidden;">fab4minds Informationstechnik</div>
<div class="t" style="left:1494.8px;top:752.32px;height:13.44px;line-height:13.44px;font-size:9.6px;font-weight:400;color:#3a3d44;width:103.6px;overflow:hidden;">fab4minds Informationstechnik</div>
<div class="t" style="left:1606.8px;top:752.32px;height:13.44px;line-height:13.44px;font-size:9.6px;font-weight:400;color:#3a3d44;width:102.1px;overflow:hidden;">fab4minds Informationstechnik</div>
<div class="b" style="left:234.5px;top:788.22px;width:1475px;height:1px;background:#e6e8ec;"></div>
<div class="t" style="left:-72px;width:400px;text-align:right;top:773.26px;height:13.44px;line-height:13.44px;font-size:9.6px;font-weight:400;color:#3a3d44;">13420336</div>
<div class="t" style="left:342.6px;top:773.26px;height:13.44px;line-height:13.44px;font-size:9.6px;font-weight:400;color:#3a3d44;width:76.4px;overflow:hidden;">14.01.2025</div>
<div class="t" style="left:427.4px;top:773.26px;height:13.44px;line-height:13.44px;font-size:9.6px;font-weight:400;color:#3a3d44;width:137px;overflow:hidden;">VK-Kontrakt Inland</div>
<div class="t" style="left:572.8px;top:773.26px;height:13.44px;line-height:13.44px;font-size:9.6px;font-weight:400;color:#3a3d44;width:128px;overflow:hidden;">1200 - Naturkost</div>
<div class="t" style="left:709.2px;top:773.26px;height:13.44px;line-height:13.44px;font-size:9.6px;font-weight:400;color:#3a3d44;width:170.4px;overflow:hidden;">Disponiert</div>
<div class="t" style="left:888px;top:773.26px;height:13.44px;line-height:13.44px;font-size:9.6px;font-weight:400;color:#3a3d44;width:92.4px;overflow:hidden;">1164591</div>
<div class="t" style="left:988.8px;top:773.26px;height:13.44px;line-height:13.44px;font-size:9.6px;font-weight:400;color:#3a3d44;width:216.4px;overflow:hidden;">Curcuwid GmbH</div>
<div class="t" style="left:1213.6px;top:773.26px;height:13.44px;line-height:13.44px;font-size:9.6px;font-weight:400;color:#3a3d44;width:136.6px;overflow:hidden;">Import RND-Lager</div>
<div class="t" style="left:1358.6px;top:773.26px;height:13.44px;line-height:13.44px;font-size:9.6px;font-weight:400;color:#3a3d44;width:127.8px;overflow:hidden;">fab4minds Informationstechnik</div>
<div class="t" style="left:1494.8px;top:773.26px;height:13.44px;line-height:13.44px;font-size:9.6px;font-weight:400;color:#3a3d44;width:103.6px;overflow:hidden;">fab4minds Informationstechnik</div>
<div class="t" style="left:1606.8px;top:773.26px;height:13.44px;line-height:13.44px;font-size:9.6px;font-weight:400;color:#3a3d44;width:102.1px;overflow:hidden;">fab4minds Informationstechnik</div>
<div class="b" style="left:234.5px;top:809.16px;width:1475px;height:1px;background:#e6e8ec;"></div>
<div class="t" style="left:-72px;width:400px;text-align:right;top:794.2px;height:13.44px;line-height:13.44px;font-size:9.6px;font-weight:400;color:#3a3d44;">13420332</div>
<div class="t" style="left:342.6px;top:794.2px;height:13.44px;line-height:13.44px;font-size:9.6px;font-weight:400;color:#3a3d44;width:76.4px;overflow:hidden;">14.01.2025</div>
<div class="t" style="left:427.4px;top:794.2px;height:13.44px;line-height:13.44px;font-size:9.6px;font-weight:400;color:#3a3d44;width:137px;overflow:hidden;">VK-Kontrakt Inland</div>
<div class="t" style="left:572.8px;top:794.2px;height:13.44px;line-height:13.44px;font-size:9.6px;font-weight:400;color:#3a3d44;width:128px;overflow:hidden;">1200 - Naturkost</div>
<div class="t" style="left:709.2px;top:794.2px;height:13.44px;line-height:13.44px;font-size:9.6px;font-weight:400;color:#3a3d44;width:170.4px;overflow:hidden;">Disponiert</div>
<div class="t" style="left:888px;top:794.2px;height:13.44px;line-height:13.44px;font-size:9.6px;font-weight:400;color:#3a3d44;width:92.4px;overflow:hidden;">1162100</div>
<div class="t" style="left:988.8px;top:794.2px;height:13.44px;line-height:13.44px;font-size:9.6px;font-weight:400;color:#3a3d44;width:216.4px;overflow:hidden;">VG Verbrauchergem. für umweltge- recht erzeugte</div>
<div class="t" style="left:1213.6px;top:794.2px;height:13.44px;line-height:13.44px;font-size:9.6px;font-weight:400;color:#3a3d44;width:136.6px;overflow:hidden;">Import RND-Lager</div>
<div class="t" style="left:1358.6px;top:794.2px;height:13.44px;line-height:13.44px;font-size:9.6px;font-weight:400;color:#3a3d44;width:127.8px;overflow:hidden;">fab4minds Informationstechnik</div>
<div class="t" style="left:1494.8px;top:794.2px;height:13.44px;line-height:13.44px;font-size:9.6px;font-weight:400;color:#3a3d44;width:103.6px;overflow:hidden;">fab4minds Informationstechnik</div>
<div class="t" style="left:1606.8px;top:794.2px;height:13.44px;line-height:13.44px;font-size:9.6px;font-weight:400;color:#3a3d44;width:102.1px;overflow:hidden;">fab4minds Informationstechnik</div>
<div class="b" style="left:234.5px;top:830.1px;width:1475px;height:1px;background:#e6e8ec;"></div>
<div class="t" style="left:-72px;width:400px;text-align:right;top:815.14px;height:13.44px;line-height:13.44px;font-size:9.6px;font-weight:400;color:#3a3d44;">13420328</div>
<div class="t" style="left:342.6px;top:815.14px;height:13.44px;line-height:13.44px;font-size:9.6px;font-weight:400;color:#3a3d44;width:76.4px;overflow:hidden;">14.01.2025</div>
<div class="t" style="left:427.4px;top:815.14px;height:13.44px;line-height:13.44px;font-size:9.6px;font-weight:400;color:#3a3d44;width:137px;overflow:hidden;">VK-Kontrakt Inland</div>
<div class="t" style="left:572.8px;top:815.14px;height:13.44px;line-height:13.44px;font-size:9.6px;font-weight:400;color:#3a3d44;width:128px;overflow:hidden;">1200 - Naturkost</div>
<div class="t" style="left:709.2px;top:815.14px;height:13.44px;line-height:13.44px;font-size:9.6px;font-weight:400;color:#3a3d44;width:170.4px;overflow:hidden;">Disponiert</div>
<div class="t" style="left:888px;top:815.14px;height:13.44px;line-height:13.44px;font-size:9.6px;font-weight:400;color:#3a3d44;width:92.4px;overflow:hidden;">1161981</div>
<div class="t" style="left:988.8px;top:815.14px;height:13.44px;line-height:13.44px;font-size:9.6px;font-weight:400;color:#3a3d44;width:216.4px;overflow:hidden;">LPG-Biomarkt GmbH</div>
<div class="t" style="left:1213.6px;top:815.14px;height:13.44px;line-height:13.44px;font-size:9.6px;font-weight:400;color:#3a3d44;width:136.6px;overflow:hidden;">Import RND-Lager</div>
<div class="t" style="left:1358.6px;top:815.14px;height:13.44px;line-height:13.44px;font-size:9.6px;font-weight:400;color:#3a3d44;width:127.8px;overflow:hidden;">fab4minds Informationstechnik</div>
<div class="t" style="left:1494.8px;top:815.14px;height:13.44px;line-height:13.44px;font-size:9.6px;font-weight:400;color:#3a3d44;width:103.6px;overflow:hidden;">fab4minds Informationstechnik</div>
<div class="t" style="left:1606.8px;top:815.14px;height:13.44px;line-height:13.44px;font-size:9.6px;font-weight:400;color:#3a3d44;width:102.1px;overflow:hidden;">fab4minds Informationstechnik</div>
<div class="b" style="left:234.5px;top:851.04px;width:1475px;height:1px;background:#e6e8ec;"></div>
<div class="t" style="left:-72px;width:400px;text-align:right;top:836.08px;height:13.44px;line-height:13.44px;font-size:9.6px;font-weight:400;color:#3a3d44;">13420324</div>
<div class="t" style="left:342.6px;top:836.08px;height:13.44px;line-height:13.44px;font-size:9.6px;font-weight:400;color:#3a3d44;width:76.4px;overflow:hidden;">14.01.2025</div>
<div class="t" style="left:427.4px;top:836.08px;height:13.44px;line-height:13.44px;font-size:9.6px;font-weight:400;color:#3a3d44;width:137px;overflow:hidden;">VK-Kontrakt Inland</div>
<div class="t" style="left:572.8px;top:836.08px;height:13.44px;line-height:13.44px;font-size:9.6px;font-weight:400;color:#3a3d44;width:128px;overflow:hidden;">1200 - Naturkost</div>
<div class="t" style="left:709.2px;top:836.08px;height:13.44px;line-height:13.44px;font-size:9.6px;font-weight:400;color:#3a3d44;width:170.4px;overflow:hidden;">Disponiert</div>
<div class="t" style="left:888px;top:836.08px;height:13.44px;line-height:13.44px;font-size:9.6px;font-weight:400;color:#3a3d44;width:92.4px;overflow:hidden;">1161599</div>
<div class="t" style="left:988.8px;top:836.08px;height:13.44px;line-height:13.44px;font-size:9.6px;font-weight:400;color:#3a3d44;width:216.4px;overflow:hidden;">Grünkern Naturkost Jürgen Blaas</div>
<div class="t" style="left:1213.6px;top:836.08px;height:13.44px;line-height:13.44px;font-size:9.6px;font-weight:400;color:#3a3d44;width:136.6px;overflow:hidden;">Import RND-Lager</div>
<div class="t" style="left:1358.6px;top:836.08px;height:13.44px;line-height:13.44px;font-size:9.6px;font-weight:400;color:#3a3d44;width:127.8px;overflow:hidden;">fab4minds Informationstechnik</div>
<div class="t" style="left:1494.8px;top:836.08px;height:13.44px;line-height:13.44px;font-size:9.6px;font-weight:400;color:#3a3d44;width:103.6px;overflow:hidden;">fab4minds Informationstechnik</div>
<div class="t" style="left:1606.8px;top:836.08px;height:13.44px;line-height:13.44px;font-size:9.6px;font-weight:400;color:#3a3d44;width:102.1px;overflow:hidden;">fab4minds Informationstechnik</div>
<div class="b" style="left:234.5px;top:871.98px;width:1475px;height:1px;background:#e6e8ec;"></div>
<div class="t" style="left:-72px;width:400px;text-align:right;top:857.02px;height:13.44px;line-height:13.44px;font-size:9.6px;font-weight:400;color:#3a3d44;">13420320</div>
<div class="t" style="left:342.6px;top:857.02px;height:13.44px;line-height:13.44px;font-size:9.6px;font-weight:400;color:#3a3d44;width:76.4px;overflow:hidden;">14.01.2025</div>
<div class="t" style="left:427.4px;top:857.02px;height:13.44px;line-height:13.44px;font-size:9.6px;font-weight:400;color:#3a3d44;width:137px;overflow:hidden;">VK-Kontrakt Inland</div>
<div class="t" style="left:572.8px;top:857.02px;height:13.44px;line-height:13.44px;font-size:9.6px;font-weight:400;color:#3a3d44;width:128px;overflow:hidden;">1200 - Naturkost</div>
<div class="t" style="left:709.2px;top:857.02px;height:13.44px;line-height:13.44px;font-size:9.6px;font-weight:400;color:#3a3d44;width:170.4px;overflow:hidden;">Disponiert</div>
<div class="t" style="left:888px;top:857.02px;height:13.44px;line-height:13.44px;font-size:9.6px;font-weight:400;color:#3a3d44;width:92.4px;overflow:hidden;">1164283</div>
<div class="t" style="left:988.8px;top:857.02px;height:13.44px;line-height:13.44px;font-size:9.6px;font-weight:400;color:#3a3d44;width:216.4px;overflow:hidden;">Naturprodukte Löwenzahn Ursula Klute</div>
<div class="t" style="left:1213.6px;top:857.02px;height:13.44px;line-height:13.44px;font-size:9.6px;font-weight:400;color:#3a3d44;width:136.6px;overflow:hidden;">Import RND-Lager</div>
<div class="t" style="left:1358.6px;top:857.02px;height:13.44px;line-height:13.44px;font-size:9.6px;font-weight:400;color:#3a3d44;width:127.8px;overflow:hidden;">fab4minds Informationstechnik</div>
<div class="t" style="left:1494.8px;top:857.02px;height:13.44px;line-height:13.44px;font-size:9.6px;font-weight:400;color:#3a3d44;width:103.6px;overflow:hidden;">fab4minds Informationstechnik</div>
<div class="t" style="left:1606.8px;top:857.02px;height:13.44px;line-height:13.44px;font-size:9.6px;font-weight:400;color:#3a3d44;width:102.1px;overflow:hidden;">fab4minds Informationstechnik</div>
<div class="b" style="left:234.5px;top:892.92px;width:1475px;height:1px;background:#e6e8ec;"></div>
<div class="t" style="left:-72px;width:400px;text-align:right;top:877.96px;height:13.44px;line-height:13.44px;font-size:9.6px;font-weight:400;color:#3a3d44;">13420316</div>
<div class="t" style="left:342.6px;top:877.96px;height:13.44px;line-height:13.44px;font-size:9.6px;font-weight:400;color:#3a3d44;width:76.4px;overflow:hidden;">14.01.2025</div>
<div class="t" style="left:427.4px;top:877.96px;height:13.44px;line-height:13.44px;font-size:9.6px;font-weight:400;color:#3a3d44;width:137px;overflow:hidden;">VK-Kontrakt Inland</div>
<div class="t" style="left:572.8px;top:877.96px;height:13.44px;line-height:13.44px;font-size:9.6px;font-weight:400;color:#3a3d44;width:128px;overflow:hidden;">1200 - Naturkost</div>
<div class="t" style="left:709.2px;top:877.96px;height:13.44px;line-height:13.44px;font-size:9.6px;font-weight:400;color:#3a3d44;width:170.4px;overflow:hidden;">Disponiert</div>
<div class="t" style="left:888px;top:877.96px;height:13.44px;line-height:13.44px;font-size:9.6px;font-weight:400;color:#3a3d44;width:92.4px;overflow:hidden;">1161362</div>
<div class="t" style="left:988.8px;top:877.96px;height:13.44px;line-height:13.44px;font-size:9.6px;font-weight:400;color:#3a3d44;width:216.4px;overflow:hidden;">Naturhaus am Brettermarkt</div>
<div class="t" style="left:1213.6px;top:877.96px;height:13.44px;line-height:13.44px;font-size:9.6px;font-weight:400;color:#3a3d44;width:136.6px;overflow:hidden;">Import RND-Lager</div>
<div class="t" style="left:1358.6px;top:877.96px;height:13.44px;line-height:13.44px;font-size:9.6px;font-weight:400;color:#3a3d44;width:127.8px;overflow:hidden;">fab4minds Informationstechnik</div>
<div class="t" style="left:1494.8px;top:877.96px;height:13.44px;line-height:13.44px;font-size:9.6px;font-weight:400;color:#3a3d44;width:103.6px;overflow:hidden;">fab4minds Informationstechnik</div>
<div class="t" style="left:1606.8px;top:877.96px;height:13.44px;line-height:13.44px;font-size:9.6px;font-weight:400;color:#3a3d44;width:102.1px;overflow:hidden;">fab4minds Informationstechnik</div>
<div class="b" style="left:1597.8px;top:872.6px;width:69.4px;height:27.4px;background:#f5f6f9;border:1px solid #d4d7de;border-radius:3px 3px 0 0;box-sizing:border-box;"></div>
<div class="t" style="left:1614px;top:879.58px;height:14.84px;line-height:14.84px;font-size:10.6px;font-weight:400;color:#3a4460;">Suchen</div>
<div class="b" style="left:1674px;top:872.6px;width:66px;height:27.4px;background:#e2e4ee;border:1px solid #cfd2dc;border-radius:3px 0 0 0;box-sizing:border-box;"></div>
<div class="t" style="left:1691.4px;top:879.3px;height:15.4px;line-height:15.4px;font-size:11px;font-weight:400;color:#3a4460;">Zurück</div>
<div class="b" style="left:0px;top:0px;width:1730px;height:26px;background:#2a2b2e;"></div>
<div class="b" style="left:0px;top:0px;width:1730px;height:2px;background:#121213;"></div>
<div class="b" style="left:0px;top:25px;width:1730px;height:1px;background:#1c1c1e;"></div>
<svg class="b" style="left:11.2px;top:7.2px" width="10" height="13.2" viewBox="0 0 10 13.2"><path d="M1.4 1.2 L8.4 6.6 L1.4 12" fill="none" stroke="#fff" stroke-width="1.6"/></svg>
<div class="b" style="left:36px;top:8.2px;width:115px;height:17.8px;background:#7cc142;border-radius:3.2px 3.2px 0 0;"></div>
<div class="b" style="left:42px;top:12px;width:9.2px;height:10.4px;background:#eef4ee;border-radius:1.2px;"></div>
<div class="t" style="left:55px;top:10.32px;height:14.14px;line-height:14.14px;font-size:10.1px;font-weight:400;color:#fff;">CRM</div>
<div class="t" style="left:137.2px;top:11.64px;height:10.92px;line-height:10.92px;font-size:7.8px;font-weight:700;color:#fff;">×</div>
<div class="b" style="left:154px;top:8.2px;width:114px;height:17.8px;background:#4a8df6;border-radius:3.2px 3.2px 0 0;"></div>
<svg class="b" style="left:158.8px;top:11.9px" width="10.2" height="10.6" viewBox="0 0 10 10"><rect width="10" height="10" rx="1" fill="#fbe9d6"/><path d="M1.5 8 L4 4 L6 6.5 L8.5 2" stroke="#f08a24" stroke-width="2" fill="none"/></svg>
<div class="t" style="left:174px;top:10.6px;height:13.58px;line-height:13.58px;font-size:9.7px;font-weight:400;color:#fff;">Agrar TEST</div>
<div class="t" style="left:254.2px;top:11.64px;height:10.92px;line-height:10.92px;font-size:7.8px;font-weight:700;color:#fff;">×</div>
<div class="b" style="left:271px;top:8.2px;width:116px;height:17.8px;background:#5b00d6;border-radius:3.2px 3.2px 0 0;"></div>
<div class="b" style="left:277px;top:12px;width:9.2px;height:10.4px;background:#eef4ee;border-radius:1.2px;"></div>
<div class="t" style="left:292.4px;top:10.76px;height:13.3px;line-height:13.3px;font-size:9.5px;font-weight:700;color:#fff;">My</div>
<div class="t" style="left:373.2px;top:11.64px;height:10.92px;line-height:10.92px;font-size:7.8px;font-weight:700;color:#fff;">×</div>
<div class="b" style="left:389px;top:5.2px;width:118.5px;height:20.8px;background:#df1535;border-radius:3.2px 3.2px 0 0;border:1.2px solid #f3a3b0;border-bottom:none;box-sizing:border-box;"></div>
<div class="b" style="left:395.8px;top:12px;width:10.2px;height:10.4px;background:#eef4ee;border-radius:1.2px;"></div>
<div class="t" style="left:410px;top:10.46px;height:13.86px;line-height:13.86px;font-size:9.9px;font-weight:700;color:#fff;">R - TEST</div>
<div class="t" style="left:493.7px;top:11.64px;height:10.92px;line-height:10.92px;font-size:7.8px;font-weight:700;color:#fff;">×</div>
<div class="b" style="left:509px;top:8.2px;width:115px;height:17.8px;background:#3f86f2;border-radius:3.2px 3.2px 0 0;"></div>
<div class="b" style="left:515px;top:12px;width:9.2px;height:10.4px;background:#eef4ee;border-radius:1.2px;"></div>
<div class="t" style="left:529.4px;top:10.54px;height:13.72px;line-height:13.72px;font-size:9.8px;font-weight:400;color:#fff;">R - PRODUKTIV</div>
<div class="t" style="left:610.2px;top:11.64px;height:10.92px;line-height:10.92px;font-size:7.8px;font-weight:700;color:#fff;">×</div>
<div class="b" style="left:627.5px;top:8.2px;width:115.5px;height:17.8px;background:#2fa84f;border-radius:3.2px 3.2px 0 0;"></div>
<div class="b" style="left:633.5px;top:12px;width:9.2px;height:10.4px;background:#eef4ee;border-radius:1.2px;"></div>
<div class="t" style="left:647.4px;top:10.46px;height:13.86px;line-height:13.86px;font-size:9.9px;font-weight:400;color:#fff;">R - TEST</div>
<div class="t" style="left:729.2px;top:11.64px;height:10.92px;line-height:10.92px;font-size:7.8px;font-weight:700;color:#fff;">×</div>
<div class="t" style="left:752.4px;top:8.36px;height:15.68px;line-height:15.68px;font-size:11.2px;font-weight:700;color:#fff;">+</div>
<div class="b" style="left:0px;top:26px;width:197.5px;height:868px;background:#4a0508;"></div>
<div class="b" style="left:-4px;top:87.4px;width:180.4px;height:25px;background:#6a0004;border-radius:3.2px;"></div>
<div class="b" style="left:190px;top:88.8px;width:5.4px;height:638.6px;background:#8a5c5f;border-radius:2.8px;"></div>
<div class="t" style="left:-2.2px;top:42.4px;font-size:23.8px;line-height:28px;height:28px;font-weight:700;color:#fff;transform-origin:0 0;transform:scaleX(0.918);letter-spacing:0px">fabular<span style="color:#ff6a00">.</span></div>
<svg class="b" style="left:2px;top:95.2px" width="9" height="9" viewBox="0 0 10 10"><path d="M0 1.6 H10 M3.4 5 H10 M3.4 8.4 H10" stroke="#d6c2c3" stroke-width="1.5"/></svg>
<div class="t" style="left:20px;top:94.06px;height:13.66px;line-height:13.66px;font-size:9.76px;font-weight:700;color:#f7eeee;">Aufgaben Liste</div>
<svg class="b" style="left:2px;top:123.72px" width="9" height="9" viewBox="0 0 10 10"><rect x="3.2" y="0.4" width="3.8" height="4" rx="1.2" fill="#d6c2c3"/><path d="M0.6 9.6 V8 Q0.6 5.8 5 5.8 Q9.4 5.8 9.4 8 V9.6 Z" fill="#d6c2c3"/></svg>
<div class="t" style="left:20px;top:122.58px;height:13.66px;line-height:13.66px;font-size:9.76px;font-weight:700;color:#f7eeee;">Partner</div>
<svg class="b" style="left:2px;top:152.24px" width="9" height="9" viewBox="0 0 10 10"><path d="M0 1 H2 L3.4 6.4 H8.6 L9.6 2.6 H3" fill="none" stroke="#d6c2c3" stroke-width="1.3"/><circle cx="4" cy="8.6" r="1" fill="#d6c2c3"/><circle cx="8" cy="8.6" r="1" fill="#d6c2c3"/></svg>
<div class="t" style="left:20px;top:151.1px;height:13.66px;line-height:13.66px;font-size:9.76px;font-weight:700;color:#f7eeee;">Einkauf</div>
<svg class="b" style="left:2px;top:180.76px" width="9" height="9" viewBox="0 0 10 10"><circle cx="5.4" cy="2.6" r="2.2" fill="none" stroke="#d6c2c3" stroke-width="1.2"/><path d="M1 9.4 Q1 6 5 6 Q9 6 9 9.4 Z" fill="#d6c2c3"/></svg>
<div class="t" style="left:20px;top:179.62px;height:13.66px;line-height:13.66px;font-size:9.76px;font-weight:700;color:#f7eeee;">Verkauf</div>
<svg class="b" style="left:2px;top:209.28px" width="9" height="9" viewBox="0 0 10 10"><path d="M0.8 9.4 V4 L5 1.2 L9.2 4 V9.4 Z" fill="none" stroke="#d6c2c3" stroke-width="1.3"/><rect x="3.4" y="5.6" width="3.2" height="3.8" fill="#d6c2c3"/></svg>
<div class="t" style="left:20px;top:208.14px;height:13.66px;line-height:13.66px;font-size:9.76px;font-weight:700;color:#f7eeee;">Lagerstand</div>
<svg class="b" style="left:2px;top:237.8px" width="9" height="9" viewBox="0 0 10 10"><path d="M1.4 0.8 H7.6 V5 M1.4 0.8 V9.2 H5" fill="none" stroke="#d6c2c3" stroke-width="1.3"/><path d="M3 3.2 H6 M3 5.4 H5" stroke="#d6c2c3" stroke-width="1"/><circle cx="7.6" cy="7.8" r="1.7" fill="#d6c2c3"/></svg>
<div class="t" style="left:20px;top:236.66px;height:13.66px;line-height:13.66px;font-size:9.76px;font-weight:700;color:#f7eeee;">Annahmestellenplanung Unkel</div>
<svg class="b" style="left:2px;top:266.3px" width="9" height="9" viewBox="0 0 10 10"><rect x="1.2" y="0.8" width="7.6" height="8.4" rx="0.8" fill="none" stroke="#d6c2c3" stroke-width="1.2"/><path d="M2.6 3.4 H7.4 M2.6 5.2 H7.4 M2.6 7 H7.4" stroke="#d6c2c3" stroke-width="1"/></svg>
<div class="t" style="left:20px;top:265.18px;height:13.66px;line-height:13.66px;font-size:9.76px;font-weight:700;color:#f7eeee;">Faktura</div>
<svg class="b" style="left:2px;top:294.82px" width="9" height="9" viewBox="0 0 10 10"><rect x="0.6" y="1.8" width="8.8" height="6.4" rx="0.8" fill="none" stroke="#d6c2c3" stroke-width="1.2"/><path d="M5 1.8 V8.2" stroke="#d6c2c3" stroke-width="1.1"/></svg>
<div class="t" style="left:20px;top:293.7px;height:13.66px;line-height:13.66px;font-size:9.76px;font-weight:700;color:#f7eeee;">Buchungsmaske</div>
<svg class="b" style="left:2px;top:323.34px" width="9" height="9" viewBox="0 0 10 10"><path d="M0.8 1.4 H9.2 V7 H4 L1.6 9 V7 H0.8 Z" fill="none" stroke="#d6c2c3" stroke-width="1.2"/></svg>
<div class="t" style="left:20px;top:322.22px;height:13.66px;line-height:13.66px;font-size:9.76px;font-weight:700;color:#f7eeee;">Wiki</div>
<svg class="b" style="left:2px;top:351.86px" width="9" height="9" viewBox="0 0 10 10"><path d="M0.8 1.4 H9.2 V7 H4 L1.6 9 V7 H0.8 Z" fill="none" stroke="#d6c2c3" stroke-width="1.2"/></svg>
<div class="t" style="left:20px;top:350.74px;height:13.66px;line-height:13.66px;font-size:9.76px;font-weight:700;color:#f7eeee;">fabby.AI</div>
<svg class="b" style="left:2px;top:380.38px" width="9" height="9" viewBox="0 0 10 10"><circle cx="5" cy="5" r="3.1" fill="none" stroke="#d6c2c3" stroke-width="2.6"/></svg>
<div class="t" style="left:20px;top:379.24px;height:13.66px;line-height:13.66px;font-size:9.76px;font-weight:700;color:#f7eeee;">Aufgabenplanung</div>
<svg class="b" style="left:2px;top:408.9px" width="9" height="9" viewBox="0 0 10 10"><path d="M1 0.8 H5.6 V3 M1 0.8 V7 H3" fill="none" stroke="#d6c2c3" stroke-width="1.2"/><rect x="3.8" y="3.2" width="5.2" height="6" fill="none" stroke="#d6c2c3" stroke-width="1.2"/></svg>
<div class="t" style="left:20px;top:407.76px;height:13.66px;line-height:13.66px;font-size:9.76px;font-weight:700;color:#f7eeee;">DMS</div>
<svg class="b" style="left:2px;top:437.42px" width="9" height="9" viewBox="0 0 10 10"><circle cx="5" cy="5" r="3.7" fill="none" stroke="#d6c2c3" stroke-width="1.3"/><path d="M5 5 V2.4 M5 5 L7 6.4" stroke="#d6c2c3" stroke-width="1.1"/></svg>
<div class="t" style="left:20px;top:436.28px;height:13.66px;line-height:13.66px;font-size:9.76px;font-weight:700;color:#f7eeee;">fabBI - Außendienst</div>
<svg class="b" style="left:2px;top:465.94px" width="9" height="9" viewBox="0 0 10 10"><circle cx="5" cy="5" r="3.7" fill="none" stroke="#d6c2c3" stroke-width="1.3"/><path d="M5 5 V2.4 M5 5 L7 6.4" stroke="#d6c2c3" stroke-width="1.1"/></svg>
<div class="t" style="left:20px;top:464.8px;height:13.66px;line-height:13.66px;font-size:9.76px;font-weight:700;color:#f7eeee;">fabBI - Vertrieb</div>
<svg class="b" style="left:2px;top:494.46px" width="9" height="9" viewBox="0 0 10 10"><circle cx="5" cy="5" r="3.7" fill="none" stroke="#d6c2c3" stroke-width="1.3"/><path d="M5 5 V2.4 M5 5 L7 6.4" stroke="#d6c2c3" stroke-width="1.1"/></svg>
<div class="t" style="left:20px;top:493.32px;height:13.66px;line-height:13.66px;font-size:9.76px;font-weight:700;color:#f7eeee;">fabBI - FICO</div>
<svg class="b" style="left:2px;top:522.98px" width="9" height="9" viewBox="0 0 10 10"><circle cx="5" cy="5" r="3.7" fill="none" stroke="#d6c2c3" stroke-width="1.3"/><path d="M5 5 V2.4 M5 5 L7 6.4" stroke="#d6c2c3" stroke-width="1.1"/></svg>
<div class="t" style="left:20px;top:521.84px;height:13.66px;line-height:13.66px;font-size:9.76px;font-weight:700;color:#f7eeee;">fabBI - Werk</div>
<svg class="b" style="left:2px;top:551.48px" width="9" height="9" viewBox="0 0 10 10"><path d="M1.4 0.8 H6 L8.6 3.4 V9.2 H1.4 Z" fill="none" stroke="#d6c2c3" stroke-width="1.2"/><path d="M3.4 7.6 V6 M5 7.6 V4.6 M6.6 7.6 V5.4" stroke="#d6c2c3" stroke-width="0.9"/></svg>
<div class="t" style="left:20px;top:550.36px;height:13.66px;line-height:13.66px;font-size:9.76px;font-weight:700;color:#f7eeee;">Planungsrechnung</div>
<svg class="b" style="left:2px;top:580px" width="9" height="9" viewBox="0 0 10 10"><rect x="1.2" y="0.8" width="7.6" height="8.4" rx="0.8" fill="none" stroke="#d6c2c3" stroke-width="1.2"/><path d="M2.6 3.4 H7.4 M2.6 5.2 H7.4 M2.6 7 H7.4" stroke="#d6c2c3" stroke-width="1"/></svg>
<div class="t" style="left:20px;top:578.88px;height:13.66px;line-height:13.66px;font-size:9.76px;font-weight:700;color:#f7eeee;">Buchungsjournal</div>
<svg class="b" style="left:2px;top:608.52px" width="9" height="9" viewBox="0 0 10 10"><path d="M0.6 3.6 L5 0.8 L9.4 3.6 Z" fill="#d6c2c3"/><path d="M2 4.4 V7.6 M5 4.4 V7.6 M8 4.4 V7.6" stroke="#d6c2c3" stroke-width="1.3"/><path d="M0.6 8.8 H9.4" stroke="#d6c2c3" stroke-width="1.3"/></svg>
<div class="t" style="left:20px;top:607.4px;height:13.66px;line-height:13.66px;font-size:9.76px;font-weight:700;color:#f7eeee;">Bankbuchung</div>
<svg class="b" style="left:2px;top:637.04px" width="9" height="9" viewBox="0 0 10 10"><path d="M3 2 L0.6 5 L3 8 M7 2 L9.4 5 L7 8" fill="none" stroke="#d6c2c3" stroke-width="1.1"/><path d="M4 8.6 L6.2 1.4" stroke="#d6c2c3" stroke-width="1.1"/></svg>
<div class="t" style="left:20px;top:635.92px;height:13.66px;line-height:13.66px;font-size:9.76px;font-weight:700;color:#f7eeee;">Zahllauf</div>
<svg class="b" style="left:2px;top:665.56px" width="9" height="9" viewBox="0 0 10 10"><path d="M3 2 L0.6 5 L3 8 M7 2 L9.4 5 L7 8" fill="none" stroke="#d6c2c3" stroke-width="1.1"/><path d="M4 8.6 L6.2 1.4" stroke="#d6c2c3" stroke-width="1.1"/></svg>
<div class="t" style="left:20px;top:664.42px;height:13.66px;line-height:13.66px;font-size:9.76px;font-weight:700;color:#f7eeee;">OP Ausgleich</div>
<svg class="b" style="left:2px;top:694.08px" width="9" height="9" viewBox="0 0 10 10"><rect x="1.2" y="0.8" width="7.6" height="8.4" rx="0.8" fill="none" stroke="#d6c2c3" stroke-width="1.2"/><path d="M2.6 3.4 H7.4 M2.6 5.2 H7.4 M2.6 7 H7.4" stroke="#d6c2c3" stroke-width="1"/></svg>
<div class="t" style="left:20px;top:692.94px;height:13.66px;line-height:13.66px;font-size:9.76px;font-weight:700;color:#f7eeee;">Kontoblatt</div>
<svg class="b" style="left:2px;top:722.6px" width="9" height="9" viewBox="0 0 10 10"><rect x="1.2" y="0.8" width="7.6" height="8.4" rx="0.8" fill="none" stroke="#d6c2c3" stroke-width="1.2"/><path d="M2.6 3.4 H7.4 M2.6 5.2 H7.4 M2.6 7 H7.4" stroke="#d6c2c3" stroke-width="1"/></svg>
<div class="t" style="left:20px;top:721.46px;height:13.66px;line-height:13.66px;font-size:9.76px;font-weight:700;color:#f7eeee;">Anlagenbuchhaltung</div>
<svg class="b" style="left:2px;top:751.12px" width="9" height="9" viewBox="0 0 10 10"><path d="M0.6 3.6 L5 0.8 L9.4 3.6 Z" fill="#d6c2c3"/><path d="M2 4.4 V7.6 M5 4.4 V7.6 M8 4.4 V7.6" stroke="#d6c2c3" stroke-width="1.3"/><path d="M0.6 8.8 H9.4" stroke="#d6c2c3" stroke-width="1.3"/></svg>
<div class="t" style="left:20px;top:749.98px;height:13.66px;line-height:13.66px;font-size:9.76px;font-weight:700;color:#f7eeee;">Konto</div>
<svg class="b" style="left:2px;top:787.5px" width="9" height="9" viewBox="0 0 10 10"><rect x="0.8" y="0.8" width="3.4" height="3.4" rx="0.8" fill="none" stroke="#d6c2c3" stroke-width="1"/><rect x="5.8" y="0.8" width="3.4" height="3.4" rx="0.8" fill="none" stroke="#d6c2c3" stroke-width="1"/><rect x="0.8" y="5.8" width="3.4" height="3.4" rx="0.8" fill="none" stroke="#d6c2c3" stroke-width="1"/><rect x="5.8" y="5.8" width="3.4" height="3.4" rx="0.8" fill="none" stroke="#d6c2c3" stroke-width="1"/></svg>
<div class="t" style="left:20px;top:786.36px;height:13.66px;line-height:13.66px;font-size:9.76px;font-weight:700;color:#f7eeee;">Übersicht</div>
<div class="b" style="left:0px;top:826.6px;width:187px;height:1px;background:#6a3d40;"></div>
<svg class="b" style="left:5.2px;top:851.2px" width="20" height="24" viewBox="0 0 10 12"><circle cx="4.9" cy="3.9" r="2.6" fill="none" stroke="#f1e4e4" stroke-width="0.9"/><path d="M0.6 12 V10.6 Q0.6 8.4 3 8.4 H6.8 Q9.2 8.4 9.2 10.6 V12" fill="none" stroke="#f1e4e4" stroke-width="0.9"/></svg>
<div class="t" style="left:36px;top:851.34px;height:13.72px;line-height:13.72px;font-size:9.8px;font-weight:700;color:#f7eeee;">Harald Falkner</div>
<div class="t" style="left:36px;top:865.92px;height:14.56px;line-height:14.56px;font-size:10.4px;font-weight:400;color:#e9dcdc;">harald.falkner@fab4minds.com</div>
<svg class="b" style="left:177.2px;top:886.8px" width="6.8" height="8.8" viewBox="0 0 6 8"><path d="M5 0.8 L1.4 4.6 L5 8" fill="none" stroke="#e8d9d9" stroke-width="1.1"/></svg>
<div class="b" style="left:0px;top:868.4px;width:157px;height:25.6px;background:rgba(10,6,8,0.4);"></div>
<div class="b" style="left:1.2px;top:877.8px;width:10px;height:12px;background:rgba(60,14,16,0.9);border:0.8px solid #3a1517;box-sizing:border-box;"></div>
<div class="t" style="left:23px;top:878.84px;height:13.72px;line-height:13.72px;font-size:9.8px;font-weight:400;color:#efe6e6;">UIConfig bearbeiten</div>
<svg class="b" style="left:118.8px;top:878.4px" width="16" height="12" viewBox="0 0 16 12"><circle cx="4.2" cy="4.2" r="2.6" fill="none" stroke="#f3ecec" stroke-width="2.4"/><circle cx="11.2" cy="8.2" r="2" fill="none" stroke="#f3ecec" stroke-width="2"/></svg>
<div class="b" style="left:144.6px;top:879.8px;width:1.4px;height:9.4px;background:#cbbcbc;"></div>
<div class="b" style="left:148.6px;top:879.8px;width:1.4px;height:9.4px;background:#cbbcbc;"></div></div></body></html>
